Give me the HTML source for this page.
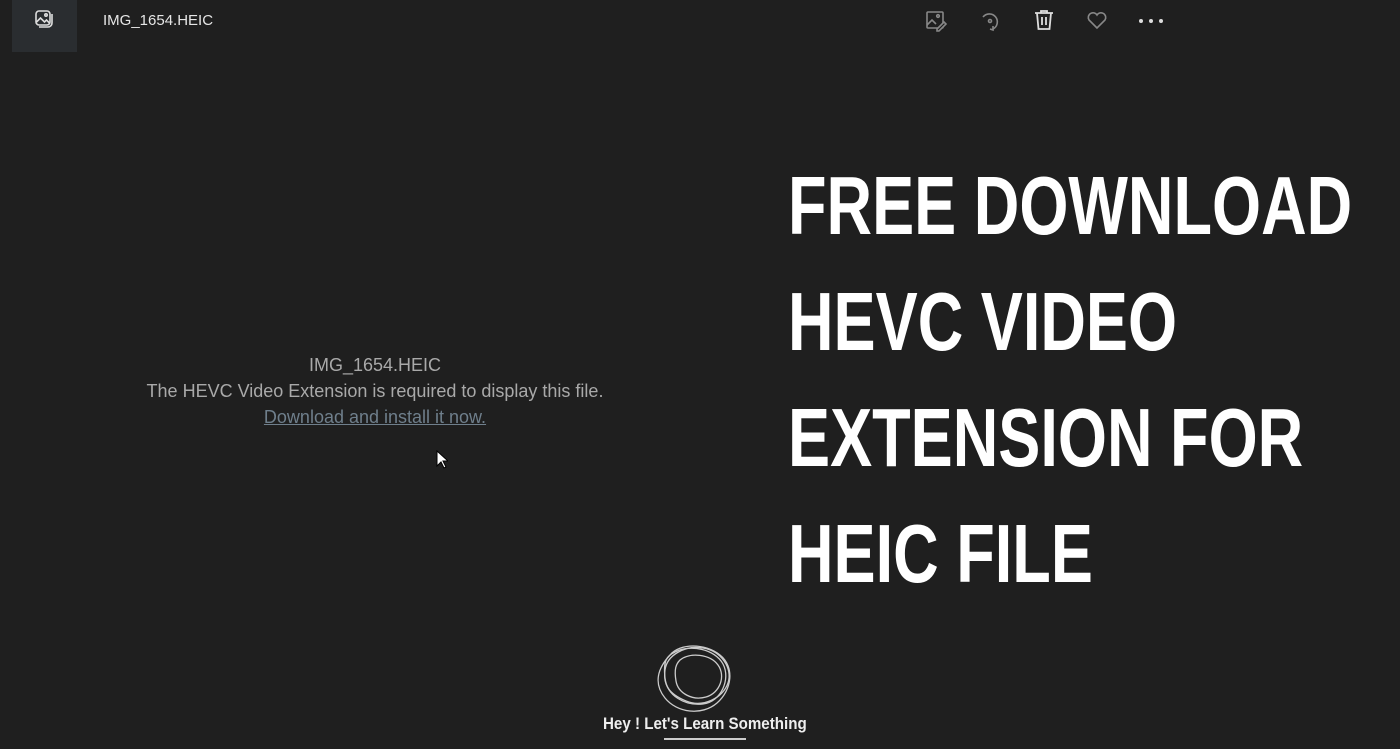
<!DOCTYPE html>
<html><head><meta charset="utf-8"><style>
html,body{margin:0;padding:0;width:1400px;height:749px;background:#1f1f1f;overflow:hidden;font-family:"Liberation Sans",sans-serif;position:relative}
.a{position:absolute}
.h{position:absolute;left:788px;font-weight:bold;font-size:83px;color:#fff;line-height:1;transform:scaleX(0.76);transform-origin:0 0;white-space:nowrap}
.msg{position:absolute;left:75px;width:600px;text-align:center;color:#a9a9a9;font-size:18px}
</style></head><body>
<div class="a" style="left:12px;top:0;width:65px;height:52px;background:#2a2d30"></div>
<svg class="a" style="left:34px;top:9px" width="20" height="20" viewBox="0 0 20 20" fill="none" stroke="#ddd" stroke-width="1.6"><rect x="2" y="2" width="14" height="14" rx="3"/><path d="M2.5 13l4-4 4 4 2-2 3 3"/><circle cx="12" cy="6" r="1.2"/><path d="M5 18h9a4 4 0 0 0 4-4V5"/></svg>
<div class="a" style="left:103px;top:12px;color:#e6e6e6;font-size:15px">IMG_1654.HEIC</div>
<svg class="a" style="left:924px;top:9px" width="24" height="24" viewBox="0 0 24 24" fill="none" stroke="#888" stroke-width="1.6"><rect x="3" y="3" width="16" height="16" rx="1"/><path d="M3 16l5-5 4 4"/><circle cx="14" cy="7" r="1.3"/><path d="M13 20l7-7 2 2-7 7h-2z" fill="#1f1f1f"/></svg>
<svg class="a" style="left:978px;top:9px" width="24" height="24" viewBox="0 0 24 24" fill="none" stroke="#888" stroke-width="1.6"><path d="M5 8a8 8 0 1 1 10 12"/><path d="M12 20l3 1 0-4"/><circle cx="12" cy="12" r="1.5"/></svg>
<svg class="a" style="left:1032px;top:8px" width="24" height="24" viewBox="0 0 24 24" fill="none" stroke="#ddd" stroke-width="1.8"><path d="M3 5h18M9 5V3h6v2M5 5l1.5 16h11L19 5M10 9v8M14 9v8"/></svg>
<svg class="a" style="left:1086px;top:10px" width="22" height="20" viewBox="0 0 22 20" fill="none" stroke="#888" stroke-width="1.6"><path d="M11 18L3 10a4.5 4.5 0 0 1 8-5 4.5 4.5 0 0 1 8 5z"/></svg>
<div class="a" style="left:1139px;top:19px;width:4px;height:4px;border-radius:2px;background:#ddd;box-shadow:10px 0 #ddd,20px 0 #ddd"></div>
<div class="msg" style="top:355px">IMG_1654.HEIC</div>
<div class="msg" style="top:381px">The HEVC Video Extension is required to display this file.</div>
<div class="msg" style="top:407px;color:#6f7f8c;text-decoration:underline">Download and install it now.</div>
<svg class="a" style="left:436px;top:450px" width="12" height="20" viewBox="0 0 12 20"><path d="M1 1v15l4-4 3 6 2-1-3-6h5z" fill="#fff" stroke="#000" stroke-width="1"/></svg>
<div class="h" style="top:164px">FREE DOWNLOAD</div>
<div class="h" style="top:280px">HEVC VIDEO</div>
<div class="h" style="top:396px">EXTENSION FOR</div>
<div class="h" style="top:512px">HEIC FILE</div>
<svg class="a" style="left:650px;top:640px" width="95" height="75" viewBox="0 0 95 75" fill="none" stroke="#ccc" stroke-width="1.3"><path d="M20 15c10-12 35-12 50 0s12 35-3 48-40 10-52-5S8 28 20 15z"/><path d="M25 12c15-8 40-3 48 12s-2 38-20 40-36-8-38-26 2-22 10-26z"/><path d="M30 20c10-8 30-6 38 5s2 28-12 32-28-4-30-16 0-17 4-21z"/><path d="M15 30c2-15 20-25 38-22s30 20 25 35-25 25-42 18S13 45 15 30z"/></svg>
<div class="a" style="left:603px;top:714px;color:#eee;font-weight:bold;font-size:17px;transform:scaleX(0.89);transform-origin:0 0;white-space:nowrap">Hey ! Let's Learn Something</div>
<div class="a" style="left:664px;top:738px;width:82px;height:2px;background:#ccc"></div>
</body></html>
